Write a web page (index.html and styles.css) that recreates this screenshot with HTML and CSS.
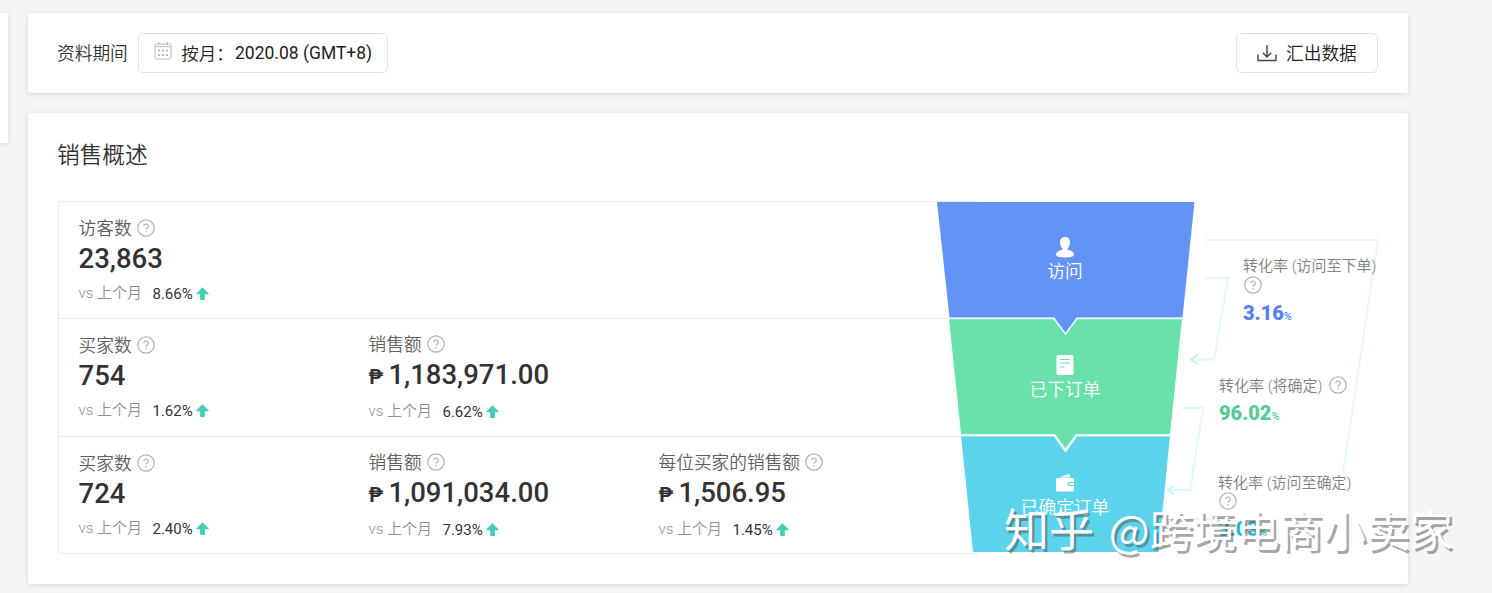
FILE: index.html
```html
<!DOCTYPE html>
<html lang="zh-CN">
<head>
    <meta charset="UTF-8">
    <meta name="viewport" content="width=device-width, initial-scale=1.0">
    <title>销售概述</title>
    <link rel="stylesheet" href="styles.css">
</head>
<body>

    <!-- Shared icons -->
    <svg class="icon-defs" width="0" height="0">
        <symbol id="help" viewBox="0 0 18 18">
            <circle cx="9" cy="9" r="8.2" fill="none" stroke="#b2b2b2" stroke-width="1.2"/>
            <path d="M6.7 7.3a2.3 2.2 0 1 1 3.5 1.8c-.8.5-1.2.8-1.2 1.7" fill="none" stroke="#b2b2b2" stroke-width="1.2"/>
            <circle cx="9" cy="12.7" r=".8" fill="#b2b2b2"/>
        </symbol>
        <symbol id="up" viewBox="0 0 13 13">
            <path d="M6.5.2 12.7 6.4Q13 7.200 12.200 7.200H8.900V12.200a.8.8 0 0 1-.8.8H4.900a.8.8 0 0 1-.8-.8V7.200H.8Q0 7.200.3 6.400Z" fill="#45cdb8"/>
        </symbol>
    </svg>

    <div class="page">
        <aside class="sidebar"></aside>

        <main class="content">
            <!-- Period filter -->
            <section class="card toolbar">
                <span class="toolbar-label">资料期间</span>
                <button class="period">
                    <svg class="calendar" width="18" height="18" viewBox="0 0 18 18">
                        <rect x="1" y="2" width="16" height="15" rx="1.5" fill="none" stroke="#bbb"/>
                        <path d="M1 4.7h16M4.5 0v3M13.5 0v3" fill="none" stroke="#bbb"/>
                        <path d="M4 8.5h2M8 8.5h2M12 8.5h2M4 13h2M8 13h2M12 13h2" stroke="#bbb" stroke-width="2"/>
                    </svg>
                    <span class="period-type">按月：</span>
                    <span>2020.08 (GMT+8)</span>
                </button>
                <button class="export">
                    <svg width="20" height="18" viewBox="0 0 20 18">
                        <path d="M1 10.5v6h18v-6M10 1v12M5.8 8.8 10 13l4.2-4.2" fill="none" stroke="#444" stroke-width="1.4"/>
                    </svg>
                    <span>汇出数据</span>
                </button>
            </section>

            <!-- Sales overview -->
            <section class="card overview">
                <h2>销售概述</h2>
                <div class="board">
                    <div class="metrics">
                        <div class="row">
                            <div class="metric">
                                <div class="name">访客数<svg><use href="#help"/></svg></div>
                                <div class="value">23,863</div>
                                <div class="compare">vs 上个月<b>8.66%</b><svg><use href="#up"/></svg></div>
                            </div>
                        </div>
                        <div class="row">
                            <div class="metric">
                                <div class="name">买家数<svg><use href="#help"/></svg></div>
                                <div class="value">754</div>
                                <div class="compare">vs 上个月<b>1.62%</b><svg><use href="#up"/></svg></div>
                            </div>
                            <div class="metric money">
                                <div class="name">销售额<svg><use href="#help"/></svg></div>
                                <div class="value"><small>₱</small>1,183,971.00</div>
                                <div class="compare">vs 上个月<b>6.62%</b><svg><use href="#up"/></svg></div>
                            </div>
                        </div>
                        <div class="row">
                            <div class="metric">
                                <div class="name">买家数<svg><use href="#help"/></svg></div>
                                <div class="value">724</div>
                                <div class="compare">vs 上个月<b>2.40%</b><svg><use href="#up"/></svg></div>
                            </div>
                            <div class="metric money">
                                <div class="name">销售额<svg><use href="#help"/></svg></div>
                                <div class="value"><small>₱</small>1,091,034.00</div>
                                <div class="compare">vs 上个月<b>7.93%</b><svg><use href="#up"/></svg></div>
                            </div>
                            <div class="metric money">
                                <div class="name">每位买家的销售额<svg><use href="#help"/></svg></div>
                                <div class="value"><small>₱</small>1,506.95</div>
                                <div class="compare">vs 上个月<b>1.45%</b><svg><use href="#up"/></svg></div>
                            </div>
                        </div>
                    </div>

                    <!-- Funnel -->
                    <div class="funnel">
                        <svg class="funnel-shape" width="258" height="352" viewBox="0 0 258 352">
                            <path d="M24 234.500H233L221.500 351H36Z" fill="#5bd3ea"/>
                            <path d="M12 118H245L233 233H139L128.500 249 117.500 233H24Z" fill="#6ae0ab"/>
                            <path d="M24 234.300H117.500L128.500 249.500 139.500 234.300H234" fill="none" stroke="#e9fdf8" stroke-width="2.500"/>
                            <path d="M0 1H257.500L245.500 116.500H139.500L128.500 132 117.500 116.500H12.500Z" fill="#6293f5"/>
                            <path d="M12 117.500H117L128.500 133 140 117.500H245.500" fill="none" stroke="#e6f8ff" stroke-width="1.600"/>
                        </svg>
                        <div class="stage">
                            <svg width="18" height="21" viewBox="0 0 18 21">
                                <path d="M9 0c3 0 5 2.200 5 5.500 0 2.400-1 4.500-2.300 5.700v1.500c3.500.8 6.300 2.400 6.300 4.800 0 2.300-4 3-9 3s-9-.7-9-3c0-2.400 2.800-4 6.300-4.800v-1.500C5 10 4 7.900 4 5.500 4 2.200 6 0 9 0Z" fill="#fff"/>
                            </svg>
                            <span>访问</span>
                        </div>
                        <div class="stage">
                            <svg width="18" height="21" viewBox="0 0 18 21">
                                <rect x=".5" width="17" height="20" rx="1.500" fill="#fff"/>
                                <path d="M4 4.500h10M4 8h10M4 12h4.500" stroke="#6ae0ab" stroke-width="1.200"/>
                            </svg>
                            <span>已下订单</span>
                        </div>
                        <div class="stage">
                            <svg width="18" height="21" viewBox="0 0 18 21">
                                <path d="M3 4.500 12 1.200q1.300-.4 1.700.8l.7 2.500Z" fill="#fff"/>
                                <path d="M1.500 5h15Q18 5 18 6.500V9h-4.500a2 2 0 0 0 0 4H18v4q0 1.500-1.500 1.500h-15Q0 18.500 0 17V6.500Q0 5 1.500 5Z" fill="#fff"/>
                                <path d="M14 10h4v2h-4a1 1 0 0 1 0-2Z" fill="#fff"/>
                            </svg>
                            <span>已确定订单</span>
                        </div>
                    </div>

                    <!-- Conversion rates -->
                    <div class="rates">
                        <svg class="arrows" width="220" height="352" viewBox="0 0 220 352" fill="none" stroke-width="2">
                            <path d="M45 39H218L183 272" stroke="#e8f7fc"/>
                            <path d="M45 77H68L54 158.500H31" stroke="#e2faf1"/>
                            <path d="M38 153.500 31 158.500 38 163.500" stroke="#c5f3e0"/>
                            <path d="M22 207H43L30 289H8" stroke="#dff9f8"/>
                            <path d="M14 284.500 8 289 14 293.500" stroke="#c8f3f7"/>
                            <path d="M70 318H2" stroke="#e2f5fc"/>
                        </svg>
                        <div class="rate rate-visit">
                            转化率 (访问至下单)
                            <svg><use href="#help"/></svg>
                            <strong>3.16<i>%</i></strong>
                        </div>
                        <div class="rate rate-order">
                            转化率 (将确定)
                            <svg><use href="#help"/></svg>
                            <strong>96.02<i>%</i></strong>
                        </div>
                        <div class="rate rate-total">
                            转化率 (访问至确定)
                            <svg><use href="#help"/></svg>
                            <strong>3.03<i>%</i></strong>
                        </div>
                    </div>
                </div>
            </section>
        </main>
    </div>

    <div class="watermark"><span>知乎</span> @跨境电商小卖家</div>

</body>
</html>
```
FILE: styles.css
```css
/* Base styles */
* {
    box-sizing: border-box;
}

body {
    margin: 0;
    height: 593px;
    overflow: hidden;
    background: #f5f5f5;
    color: #333;
    font-family: Roboto, "Noto Sans CJK SC", sans-serif;
    font-size: 17.7px;
    font-weight: 350;
}

svg {
    flex: none;
}

.icon-defs {
    position: absolute;
}

.page {
    display: flex;
    gap: 20px;
    padding-top: 13px;
}

.sidebar {
    width: 8px;
    height: 130px;
    background: #fff;
    box-shadow: 0 1px 5px rgba(0, 0, 0, 0.12);
}

.content {
    display: flex;
    flex-direction: column;
    gap: 20px;
    width: 1380px;
}

.card {
    background: #fff;
    border-radius: 2px;
    box-shadow: 0 1px 5px rgba(0, 0, 0, 0.12);
}

/* Period filter */
.toolbar {
    display: flex;
    align-items: center;
    height: 80px;
    padding: 0 30px 0 29px;
}

.toolbar-label {
    width: 81px;
    padding-bottom: 2px;
}

.toolbar button {
    display: flex;
    align-items: center;
    height: 40px;
    background: #fff;
    border: 1px solid #e3e3e3;
    border-radius: 5px;
    color: #222;
    font: inherit;
}

.period {
    width: 250px;
    padding: 0 0 0 15px;
    white-space: nowrap;
}

.toolbar .period {
    font-size: 17.5px;
    font-weight: 400;
}

.calendar {
    margin: -5px 8px 0 0;
}

.period-type {
    width: 55px;
    padding-bottom: 2px;
    font-weight: 350;
}

.export {
    width: 142px;
    margin-left: auto;
    padding: 0 0 0 20px;
    gap: 9px;
}

.export span {
    padding-bottom: 2px;
}

/* Sales overview */
.overview {
    height: 471px;
    padding: 26px 29px 0 30px;
}

.overview h2 {
    height: 62px;
    margin: 0 0 0 -1px;
    font-size: 22.7px;
    line-height: 34px;
    font-weight: 350;
}

.board {
    display: flex;
    height: 353px;
}

.metrics {
    display: grid;
    grid-template-rows: 116px 118px 117px;
    flex: none;
    width: 920px;
    border: 1px solid #ebebeb;
    border-right: 0;
    border-radius: 3px 0 0 3px;
}

.row {
    display: flex;
    padding: 14px 0 0 19.5px;
}

.row + .row {
    border-top: 1px solid #ebebeb;
}

.metric {
    width: 290px;
}

.name {
    display: flex;
    align-items: center;
    gap: 5px;
    height: 24px;
    margin-top: -1px;
    color: #606060;
}

.name svg {
    width: 18px;
    height: 18px;
    margin-top: 2px;
}

.value {
    height: 36px;
    margin-top: 2px;
    color: #333;
    font-size: 27.5px;
    line-height: 36px;
    font-weight: 500;
}

.value small {
    margin-right: 5px;
    font-size: 20px;
    font-weight: 700;
}

.compare {
    display: flex;
    align-items: center;
    margin-top: 2px;
    height: 24px;
    color: #909090;
    font-size: 15px;
}

.compare b {
    margin: 5px 3.5px 0 10.5px;
    color: #333;
    font-weight: 400;
}

.compare svg {
    width: 13px;
    height: 13px;
    margin-top: 4px;
}

.money .name {
    margin-top: -2px;
}

.money .compare {
    margin-top: 4px;
}

/* Funnel */
.funnel {
    position: relative;
    flex: none;
    width: 258px;
    height: 352px;
    margin-left: -41px;
    padding: 36px 2px 0 0;
}

.funnel-shape {
    position: absolute;
    top: 0;
    left: 0;
}

.stage {
    position: relative;
    display: flex;
    flex-direction: column;
    align-items: center;
    height: 118px;
    color: #fff;
    line-height: 28px;
}

/* Conversion rates */
.rates {
    position: relative;
    flex: 1;
    padding-top: 54px;
    color: #808080;
    font-size: 15px;
    line-height: 22px;
}

.arrows {
    position: absolute;
    top: 0;
    left: -35px;
}

.rate {
    position: relative;
    width: 137px;
    white-space: nowrap;
}

.rate svg {
    display: block;
    width: 18px;
    height: 18px;
    margin: -1px 0 0 1px;
}

.rate strong {
    display: block;
    height: 22px;
    font-size: 20px;
    font-weight: 900;
}

.rate i {
    font-size: 11px;
    font-style: normal;
    font-weight: 500;
}

.rate-visit {
    height: 120px;
    margin-left: 48px;
}

.rate-visit strong {
    margin-top: 8px;
    color: #5383e8;
}

.rate-order {
    display: flex;
    flex-wrap: wrap;
    width: 140px;
    height: 97px;
    margin-left: 24px;
    align-content: flex-start;
}

.rate-order svg {
    margin: 1px 0 0 7px;
}

.rate-order strong {
    width: 100%;
    margin-top: 5px;
    color: #59cc96;
}

.rate-total {
    margin-left: 23px;
}

.rate-total svg {
    margin-top: -2px;
}

.rate-total strong {
    margin-top: 8px;
    color: #28b7d3;
}

/* Watermark over the whole page */
.watermark {
    position: absolute;
    top: 497px;
    left: 1004px;
    color: #fff;
    font-family: "Noto Sans CJK SC", sans-serif;
    font-size: 43.3px;
    font-weight: 400;
    line-height: 62px;
    white-space: nowrap;
    text-shadow: 2.5px 2.5px 0 rgba(80, 80, 80, 0.5);
}

.watermark span {
    margin-right: 5px;
    font-size: 45px;
}
```
